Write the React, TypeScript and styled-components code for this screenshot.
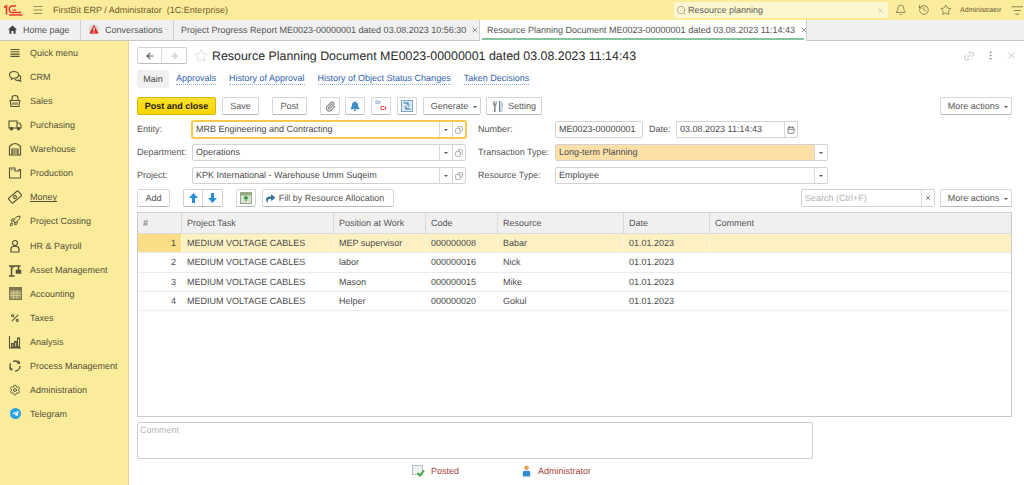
import type { ReactNode } from "react";
import styled, { createGlobalStyle } from "styled-components";
import {
  ArrowLeft,
  ArrowRight,
  Bell,
  Calendar,
  Copy,
  History,
  Link2,
  ListFilter,
  Menu,
  MoreVertical,
  Percent,
  Rocket,
  Search,
  Settings,
  Star,
  X,
  Paperclip,
} from "lucide-react";
import { FaBell, FaShare, FaTelegramPlane } from "react-icons/fa";
import { IoMdHome } from "react-icons/io";

const GlobalStyle = createGlobalStyle`
  html, body {
    margin: 0;
    padding: 0;
    background: #fff;
    font-family: "Liberation Sans", Arial, sans-serif;
    font-size: 9px;
    color: #4b4b4b;
    text-rendering: geometricPrecision;
  }
  * { box-sizing: border-box; }
`;

const Page = styled.div`
  width: 1024px;
  height: 485px;
  display: flex;
  flex-direction: column;
  overflow: hidden;
`;

const TopBar = styled.div`
  height: 20px;
  background: #fbec9c;
  display: flex;
  align-items: center;
  flex-shrink: 0;
`;

const LogoBox = styled.div`
  width: 32px;
  padding-left: 3px;
  display: flex;
  align-items: center;
`;

const AppTitle = styled.div`
  margin-left: 9px;
  color: #6e5a28;
  font-size: 9px;
  white-space: pre;
  flex: 1;
`;

const GlobalSearch = styled.div`
  width: 214px;
  height: 16px;
  background: #fdf6cf;
  border-radius: 2px;
  display: flex;
  align-items: center;
  padding: 0 4px 0 2px;
  gap: 1px;
  color: #5b5b5b;
  font-size: 9px;
  margin-right: 4px;
`;

const GlobalSearchText = styled.span`
  flex: 1;
`;

const TopIcons = styled.div`
  display: flex;
  align-items: center;
  gap: 11px;
  color: #55502f;
  width: 132px;
  padding-left: 3px;
`;

const UserName = styled.span`
  font-size: 7px;
  color: #5a5330;
  margin-left: -3px;
  margin-right: -1px;
  white-space: nowrap;
`;

const TabBar = styled.div`
  height: 21px;
  background: #f0f0f0;
  border-bottom: 1px solid #c8c8c8;
  display: flex;
  flex-shrink: 0;
`;

const Tab = styled.div<{ $width: number; $active?: boolean }>`
  width: ${(p) => p.$width}px;
  display: flex;
  align-items: center;
  gap: 5px;
  padding: 0 0 1px 7px;
  white-space: nowrap;
  color: #555;
  font-size: 9px;
  border-right: 1px solid #cfcfcf;
  position: relative;
  background: ${(p) => (p.$active ? "#fff" : "transparent")};
  height: ${(p) => (p.$active ? "21px" : "20px")};
  ${(p) =>
    p.$active &&
    `&::after {
      content: "";
      position: absolute;
      left: 2px;
      right: 2px;
      bottom: 1px;
      height: 2px;
      background: #83c3a0;
    }`}
`;

const TabClose = styled.span`
  display: inline-flex;
  color: #666;
`;

const Body = styled.div`
  flex: 1;
  display: flex;
  min-height: 0;
`;

const Sidebar = styled.div`
  width: 129px;
  background: #fbec9c;
  border-right: 1px solid #e3d688;
  flex-shrink: 0;
`;

const SideItem = styled.div<{ $underline?: boolean }>`
  height: 24.07px;
  display: flex;
  align-items: center;
  color: #54503a;
  font-size: 9px;
  text-decoration: ${(p) => (p.$underline ? "underline" : "none")};
`;

const SideIcon = styled.span`
  width: 30px;
  display: flex;
  justify-content: center;
  color: #57533a;
`;

const Tilted = styled.span`
  display: flex;
  transform: rotate(-40deg);
`;

const Mirrored = styled.span`
  display: flex;
  transform: scaleX(-1);
  color: #777;
`;

const TelegramDot = styled.span`
  width: 11px;
  height: 11px;
  background: #2aa3e6;
  border-radius: 50%;
  display: flex;
  align-items: center;
  justify-content: center;
  color: #fff;
`;

const Main = styled.div`
  flex: 1;
  padding: 6px 12px 0 8px;
  min-width: 0;
`;

const HeaderRow = styled.div`
  height: 17px;
  display: flex;
  align-items: center;
`;

const ButtonGroup = styled.div<{ $height?: number; $left?: number }>`
  display: flex;
  height: ${(p) => p.$height ?? 17}px;
  margin-left: ${(p) => p.$left ?? 0}px;
  background: #fff;
  border: 1px solid #d2d2d2;
  border-bottom-color: #bdbdbd;
  border-radius: 2px;
`;

const GroupButton = styled.div<{ $width: number; $divider?: boolean }>`
  width: ${(p) => p.$width}px;
  display: flex;
  align-items: center;
  justify-content: center;
  border-right: ${(p) => (p.$divider ? "1px solid #d8d8d8" : "none")};
`;

const FavoriteStar = styled.span`
  display: flex;
  margin-left: 7px;
  color: #c8c8c8;
`;

const Title = styled.div`
  font-size: 12.4px;
  color: #2b2b2b;
  margin-left: 4px;
  white-space: nowrap;
  flex: 1;
`;

const HeaderTools = styled.div`
  display: flex;
  align-items: center;
  gap: 10px;
  color: #a8a8a8;
  margin-right: -5px;
`;

const SectionTabs = styled.div`
  margin-top: 6px;
  height: 18px;
  display: flex;
  align-items: center;
`;

const MainTab = styled.div`
  width: 32px;
  height: 18px;
  background: #f0f0f0;
  border-radius: 2px;
  display: flex;
  align-items: center;
  justify-content: center;
  color: #4b4b4b;
  margin-right: 7px;
`;

const SectionLink = styled.span<{ $gap: number }>`
  color: #2f5fb0;
  border-bottom: 1px dotted #8fa9d8;
  margin-right: ${(p) => p.$gap}px;
  line-height: 11px;
  white-space: nowrap;
`;

const CommandBar = styled.div`
  margin-top: 9px;
  height: 18px;
  display: flex;
  align-items: stretch;
`;

const Button = styled.div<{ $width: number; $left?: number }>`
  width: ${(p) => p.$width}px;
  margin-left: ${(p) => p.$left ?? 0}px;
  display: flex;
  align-items: center;
  justify-content: center;
  gap: 4px;
  flex-shrink: 0;
  background: #fff;
  border: 1px solid #d6d6d6;
  border-bottom: 1px solid #b9b9b9;
  border-radius: 2px;
  color: #555;
  font-size: 9px;
  white-space: nowrap;
`;

const PrimaryButton = styled(Button)`
  background: linear-gradient(#fce22c, #f9d400);
  border-color: #d6b600;
  color: #1f1a00;
  font-weight: bold;
`;

const MenuButton = styled(Button)`
  gap: 5px;
  padding-left: 4px;
`;

const FillButton = styled(Button)`
  padding-right: 6px;
`;

const Caret = styled.span`
  width: 0;
  height: 0;
  border-left: 2px solid transparent;
  border-right: 2px solid transparent;
  border-top: 2px solid #555;
  margin-top: 1px;
`;

const Spacer = styled.div`
  flex: 1;
`;

const DrCr = styled.span`
  display: flex;
  flex-direction: column;
  font-size: 5px;
  line-height: 6px;
  font-weight: bold;
  color: #7a98b8;
`;

const CrText = styled.span`
  color: #d22;
  margin-left: 5px;
  font-size: 6px;
`;

const FormRow = styled.div`
  margin-top: 6px;
  height: 17px;
  display: flex;
  align-items: center;
`;

const Label = styled.div<{ $width: number }>`
  width: ${(p) => p.$width}px;
  flex-shrink: 0;
  color: #555;
  white-space: nowrap;
  padding-bottom: 1px;
`;

const Field = styled.div<{ $width: number; $focus?: boolean }>`
  width: ${(p) => p.$width}px;
  height: 17px;
  flex-shrink: 0;
  display: flex;
  align-items: stretch;
  background: #fff;
  border: 1px solid ${(p) => (p.$focus ? "#f8c94a" : "#d2d2d2")};
  border-radius: 2px;
  box-shadow: ${(p) => (p.$focus ? "0 0 0 1px #f8c94a" : "none")};
`;

const FieldValue = styled.div<{ $fill?: string }>`
  flex: 1;
  display: flex;
  align-items: center;
  padding: 0 0 1px 3px;
  color: #4b4b4b;
  white-space: nowrap;
  background: ${(p) => p.$fill ?? "transparent"};
`;

const FieldButton = styled.div`
  width: 13px;
  display: flex;
  align-items: center;
  justify-content: center;
  border-left: 1px solid #d8d8d8;
  color: #555;
`;

const FormGap = styled.div<{ $width: number }>`
  width: ${(p) => p.$width}px;
  flex-shrink: 0;
`;

const TableBar = styled.div`
  margin-top: 5px;
  height: 18px;
  display: flex;
  align-items: stretch;
`;

const SearchField = styled.div`
  width: 134px;
  margin-left: auto;
  display: flex;
  align-items: stretch;
  border: 1px solid #d2d2d2;
  border-radius: 2px;
  color: #b0b0b0;
`;

const SearchPlaceholder = styled.div`
  flex: 1;
  display: flex;
  align-items: center;
  padding-left: 3px;
`;

const Grid = styled.div`
  margin-top: 5px;
  height: 205px;
  border: 1px solid #c9c9c9;
  border-top-color: #d4d4d4;
`;

const columns = "44px 152px 92px 72px 126px 86px 1fr";

const GridHeader = styled.div`
  height: 21px;
  display: grid;
  grid-template-columns: ${columns};
  background: #f0f0f0;
  border-bottom: 1px solid #dcdcdc;
`;

const HeadCell = styled.div`
  display: flex;
  align-items: center;
  padding-left: 5px;
  border-right: 1px solid #dadada;
  color: #555;
  &:last-child {
    border-right: none;
  }
`;

const GridRow = styled.div<{ $selected?: boolean }>`
  height: 19.33px;
  display: grid;
  grid-template-columns: ${columns};
  background: ${(p) => (p.$selected ? "#fdf1c4" : "#fff")};
  border-bottom: 1px solid #ececec;
`;

const Cell = styled.div<{ $selected?: boolean }>`
  display: flex;
  align-items: center;
  padding-left: 5px;
  color: #4b4b4b;
  white-space: nowrap;
  border-right: 1px solid ${(p) => (p.$selected ? "#fff6d8" : "transparent")};
`;

const NumberCell = styled(Cell)<{ $selected?: boolean }>`
  justify-content: flex-end;
  padding: 0 5px 0 0;
  background: ${(p) => (p.$selected ? "#fbdd88" : "transparent")};
`;

const CommentBox = styled.div`
  margin-top: 5px;
  width: 676px;
  height: 37px;
  border: 1px solid #cfcfcf;
  border-radius: 2px;
  color: #b5b5b5;
  padding: 2px;
`;

const Footer = styled.div`
  margin-top: 5px;
  margin-left: 275px;
  height: 14px;
  display: flex;
  align-items: center;
  color: #a8413a;
`;

const FooterItem = styled.div<{ $width: number; $gap: number; $left?: number }>`
  width: ${(p) => p.$width}px;
  padding-left: ${(p) => p.$left ?? 0}px;
  display: flex;
  align-items: center;
  gap: ${(p) => p.$gap}px;
`;

const LogoMark = () => (
  <svg width="20" height="12" viewBox="0 0 20 12" fill="none" stroke="#e8352a">
    <path d="M1 3.5 L3.5 2 V10.5" strokeWidth="1.6" />
    <path d="M18 8.5 H9.5 A3.2 3.2 0 0 1 9.5 2 H13" strokeWidth="1.4" />
    <path d="M6 11 H19.5" strokeWidth="1.4" />
    <path d="M9.5 6 H13" strokeWidth="1.2" />
  </svg>
);

const AlertBubble = () => (
  <svg width="12" height="11" viewBox="0 0 12 11">
    <circle cx="6" cy="5.5" r="5.2" fill="#d8d8d8" />
    <path d="M6 .8 L10.6 9.6 H1.4 Z" fill="#d92a26" />
    <rect x="5.4" y="3.6" width="1.2" height="3.2" fill="#fff" />
    <rect x="5.4" y="7.4" width="1.2" height="1.2" fill="#fff" />
  </svg>
);

const SwapIcon = () => (
  <svg width="12" height="12" viewBox="0 0 12 12">
    <rect x=".5" y=".5" width="11" height="11" fill="#dcebf5" stroke="#7aa5c5" />
    <path d="M2.5 3 H7 V5.5 M9.5 9 H5 V6.5" stroke="#2f6f9f" strokeWidth="1.2" fill="none" />
    <path d="M7 7 L9.5 4.5 M3 7.5 L5 5.5" stroke="#7aa5c5" fill="none" />
  </svg>
);

const ToolsIcon = () => (
  <svg width="12" height="13" viewBox="0 0 12 13" fill="#8a8a8a">
    <path d="M1 1 V4 Q1 5.5 2 5.8 V12 H3.6 V5.8 Q4.6 5.5 4.6 4 V1 H4 V3.6 H3.2 V1 H2.4 V3.6 H1.6 V1 Z" />
    <path d="M7 1 H8.4 V12 H7 Z" fill="#5f8fae" />
    <path d="M9.6 1 Q11.5 3 11 6.5 H10.4 V12 H9.6 Z" fill="#a8a8a8" />
  </svg>
);

const TrayIcon = () => (
  <svg width="12" height="12" viewBox="0 0 12 12">
    <rect x=".5" y=".5" width="11" height="11" fill="#d8e4cf" stroke="#9aa890" />
    <rect x="1" y="1" width="10" height="2.5" fill="#8fb07c" />
    <path d="M6 9 V5 M4 6.6 L6 4.6 L8 6.6" stroke="#3e9a3e" strokeWidth="1.4" fill="none" />
  </svg>
);

const BlueArrow = ({ down }: { down?: boolean }) => (
  <svg width="9" height="10" viewBox="0 0 9 10" fill="#2a8fd8">
    <path d={down ? "M3 0 H6 V5 H9 L4.5 10 L0 5 H3 Z" : "M3 10 H6 V5 H9 L4.5 0 L0 5 H3 Z"} />
  </svg>
);

const PostedIcon = () => (
  <svg width="13" height="12" viewBox="0 0 13 12">
    <rect x=".5" y=".5" width="10" height="9" fill="#eef2f5" stroke="#b4bcc4" />
    <path d="M5.5 8 L8 10.5 L12 5.5" stroke="#3fa83f" strokeWidth="2" fill="none" />
  </svg>
);

const PersonIcon = () => (
  <svg width="9" height="12" viewBox="0 0 9 12">
    <circle cx="4.5" cy="2.8" r="2.3" fill="#e2a45f" />
    <path d="M.8 11.5 V7.5 Q.8 5.8 2.6 5.8 H6.4 Q8.2 5.8 8.2 7.5 V11.5 Z" fill="#2f8ecb" />
  </svg>
);

const SideSvg = ({ children, width = 1.1 }: { children: ReactNode; width?: number }) => (
  <svg width="14" height="14" viewBox="0 0 14 14" fill="none" stroke="currentColor" strokeWidth={width}>
    {children}
  </svg>
);

const sideItems: { name: string; icon: ReactNode; underline?: boolean }[] = [
  {
    name: "Quick menu",
    icon: (
      <SideSvg>
        <path d="M2.5 3.5 H11.5 M2.5 5.8 H11.5 M2.5 8.1 H11.5 M2.5 10.4 H11.5" />
      </SideSvg>
    ),
  },
  {
    name: "CRM",
    icon: (
      <SideSvg>
        <path d="M1.5 5 C1.5 2.8 3.6 1.5 6 1.5 C8.5 1.5 10.5 3 10.5 5 C10.5 7 8.5 8.3 6 8.3 L5 8.3 L3.4 9.4 L3.4 7.8 C2.2 7.2 1.5 6.2 1.5 5Z" />
        <path d="M11 5 C12.6 6 13 7.6 12.2 9 L12.6 11.2 L10.5 10.2 C9 10.6 7.5 10.2 6.6 9" />
      </SideSvg>
    ),
  },
  {
    name: "Sales",
    icon: (
      <SideSvg>
        <path d="M1.5 6.5 H12.5 M2.3 6.5 L3 12.5 H11 L11.7 6.5" />
        <path d="M4 6.5 V4 Q4 1.5 7 1.5 Q10 1.5 10 4 V6.5" />
        <path d="M5 8.3 V11 M7 8.3 V11 M9 8.3 V11" />
      </SideSvg>
    ),
  },
  {
    name: "Purchasing",
    icon: (
      <SideSvg>
        <rect x="1" y="3" width="8" height="7" />
        <path d="M9 5 H11.8 L13 7 V10 H9" />
        <circle cx="3.5" cy="10.8" r="1.2" fill="currentColor" />
        <circle cx="10.5" cy="10.8" r="1.2" fill="currentColor" />
      </SideSvg>
    ),
  },
  {
    name: "Warehouse",
    icon: (
      <SideSvg width={1.2}>
        <path d="M1.5 13 V4.5 Q4 1.5 7 1.5 Q10 1.5 12.5 4.5 V13 Z" />
        <path d="M4 13 V7 H10 V13 M4 9 H10 M4 11 H10" />
      </SideSvg>
    ),
  },
  {
    name: "Production",
    icon: (
      <SideSvg>
        <path d="M1.5 12 V2 H7 V5 H11 V3.5 H12.5 V12 Z" />
        <path d="M3 3.7 H5.5" strokeDasharray="1 .6" />
      </SideSvg>
    ),
  },
  {
    name: "Money",
    icon: (
      <SideSvg>
        <g transform="rotate(-40 7 7)">
          <rect x=".8" y="3.8" width="12.4" height="6.4" rx="1" />
          <circle cx="7" cy="7" r="1.5" />
        </g>
      </SideSvg>
    ),
    underline: true,
  },
  { name: "Project Costing", icon: <Rocket size={12} strokeWidth={2} /> },
  {
    name: "HR & Payroll",
    icon: (
      <SideSvg width={1.2}>
        <circle cx="7" cy="4" r="2.5" />
        <path d="M3 13 V10 Q3 7.5 5.5 7.5 H8.5 Q11 7.5 11 10 V13 Z" />
      </SideSvg>
    ),
  },
  {
    name: "Asset Management",
    icon: (
      <SideSvg width={1.5}>
        <path d="M3.5 13 V2.5 M1 13 H6.5 M1 3 H12.5 M10.5 3 V7" />
        <rect x="8.5" y="7.5" width="4" height="2.5" fill="currentColor" />
        <path d="M3.5 6 L7 3" strokeWidth="1" />
      </SideSvg>
    ),
  },
  {
    name: "Accounting",
    icon: (
      <svg width="13" height="13" viewBox="0 0 13 13">
        <rect x=".5" y=".5" width="12" height="12" fill="#a39c6c" stroke="#7d7850" />
        <rect x="1" y="1" width="11" height="2.4" fill="#7d7850" />
        <path d="M1 6 H12 M1 8.5 H12 M4.5 3.4 V12 M8 3.4 V12" stroke="#e8dc94" strokeWidth=".7" />
      </svg>
    ),
  },
  { name: "Taxes", icon: <Percent size={10} strokeWidth={2.6} /> },
  {
    name: "Analysis",
    icon: (
      <SideSvg>
        <path d="M1.5 1 V13 H13" />
        <rect x="3.5" y="8.5" width="1.8" height="4" />
        <rect x="6.5" y="6.5" width="1.8" height="6" />
        <rect x="9.5" y="3" width="2" height="9.5" />
      </SideSvg>
    ),
  },
  {
    name: "Process Management",
    icon: (
      <SideSvg width={1.3}>
        <circle cx="7" cy="7" r="5" strokeDasharray="7.5 2.97" />
        <path d="M10.5 1.5 L11.8 4 L9 4.2 M1.5 8.5 L2.5 11 L4.5 9.5" strokeWidth=".9" />
      </SideSvg>
    ),
  },
  { name: "Administration", icon: <Settings size={12} strokeWidth={1.8} /> },
];

const rows = [
  { n: 1, position: "MEP supervisor", code: "000000008", resource: "Babar" },
  { n: 2, position: "labor", code: "000000016", resource: "Nick" },
  { n: 3, position: "Mason", code: "000000015", resource: "Mike" },
  { n: 4, position: "Helper", code: "000000020", resource: "Gokul" },
];

const Dropdown = () => (
  <FieldButton>
    <Caret />
  </FieldButton>
);

const OpenButton = () => (
  <FieldButton>
    <Mirrored>
      <Copy size={8} strokeWidth={1.8} />
    </Mirrored>
  </FieldButton>
);

export default function App() {
  return (
    <Page>
      <GlobalStyle />
      <TopBar>
        <LogoBox>
          <LogoMark />
        </LogoBox>
        <Menu size={12} color="#6b6546" strokeWidth={1.4} />
        <AppTitle>FirstBit ERP / Administrator  (1C:Enterprise)</AppTitle>
        <GlobalSearch>
          <Search size={11} strokeWidth={1.2} color="#777" />
          <GlobalSearchText>Resource planning</GlobalSearchText>
          <X size={7} color="#aaa" />
        </GlobalSearch>
        <TopIcons>
          <Bell size={12} strokeWidth={1.3} />
          <History size={12} strokeWidth={1.3} />
          <Star size={12} strokeWidth={1.3} />
          <UserName>Administrator</UserName>
          <ListFilter size={13} strokeWidth={1.3} />
        </TopIcons>
      </TopBar>
      <TabBar>
        <Tab $width={81}>
          <IoMdHome size={11} color="#444" />
          Home page
        </Tab>
        <Tab $width={93}>
          <AlertBubble />
          Conversations
        </Tab>
        <Tab $width={306}>
          Project Progress Report ME0023-00000001 dated 03.08.2023 10:56:30
          <TabClose>
            <X size={8} />
          </TabClose>
        </Tab>
        <Tab $width={327} $active>
          Resource Planning Document ME0023-00000001 dated 03.08.2023 11:14:43
          <TabClose>
            <X size={8} />
          </TabClose>
        </Tab>
      </TabBar>
      <Body>
        <Sidebar>
          {sideItems.map((item) => (
            <SideItem key={item.name} $underline={item.underline}>
              <SideIcon>{item.icon}</SideIcon>
              {item.name}
            </SideItem>
          ))}
          <SideItem>
            <SideIcon>
              <TelegramDot>
                <FaTelegramPlane size={7} />
              </TelegramDot>
            </SideIcon>
            Telegram
          </SideItem>
        </Sidebar>
        <Main>
          <HeaderRow>
            <ButtonGroup>
              <GroupButton $width={24} $divider>
                <ArrowLeft size={10} strokeWidth={2.6} color="#555" />
              </GroupButton>
              <GroupButton $width={24}>
                <ArrowRight size={10} strokeWidth={2.6} color="#c4c4c4" />
              </GroupButton>
            </ButtonGroup>
            <FavoriteStar>
              <Star size={14} strokeWidth={1} />
            </FavoriteStar>
            <Title>Resource Planning Document ME0023-00000001 dated 03.08.2023 11:14:43</Title>
            <HeaderTools>
              <Tilted>
                <Link2 size={12} strokeWidth={1.4} />
              </Tilted>
              <MoreVertical size={11} strokeWidth={2} color="#888" />
              <X size={11} strokeWidth={1.4} />
            </HeaderTools>
          </HeaderRow>
          <SectionTabs>
            <MainTab>Main</MainTab>
            <SectionLink $gap={13}>Approvals</SectionLink>
            <SectionLink $gap={13}>History of Approval</SectionLink>
            <SectionLink $gap={13}>History of Object Status Changes</SectionLink>
            <SectionLink $gap={0}>Taken Decisions</SectionLink>
          </SectionTabs>
          <CommandBar>
            <PrimaryButton $width={79}>Post and close</PrimaryButton>
            <Button $width={37} $left={6}>
              Save
            </Button>
            <Button $width={35} $left={13}>
              Post
            </Button>
            <Button $width={20} $left={13}>
              <Paperclip size={11} color="#888" strokeWidth={2.4} />
            </Button>
            <Button $width={20} $left={5}>
              <FaBell size={10} color="#3f8fc4" />
            </Button>
            <Button $width={20} $left={6}>
              <DrCr>
                Dr
                <CrText>Cr</CrText>
              </DrCr>
            </Button>
            <Button $width={20} $left={6}>
              <SwapIcon />
            </Button>
            <MenuButton $width={58} $left={6}>
              Generate
              <Caret />
            </MenuButton>
            <Button $width={56} $left={5}>
              <ToolsIcon />
              Setting
            </Button>
            <Spacer />
            <MenuButton $width={72}>
              More actions
              <Caret />
            </MenuButton>
          </CommandBar>
          <FormRow>
            <Label $width={55}>Entity:</Label>
            <Field $width={274} $focus>
              <FieldValue>MRB Engineering and Contracting</FieldValue>
              <Dropdown />
              <OpenButton />
            </Field>
            <FormGap $width={12} />
            <Label $width={77}>Number:</Label>
            <Field $width={88}>
              <FieldValue>ME0023-00000001</FieldValue>
            </Field>
            <FormGap $width={6} />
            <Label $width={27}>Date:</Label>
            <Field $width={122}>
              <FieldValue>03.08.2023 11:14:43</FieldValue>
              <FieldButton>
                <Calendar size={8} strokeWidth={2} />
              </FieldButton>
            </Field>
          </FormRow>
          <FormRow>
            <Label $width={55}>Department:</Label>
            <Field $width={274}>
              <FieldValue>Operations</FieldValue>
              <Dropdown />
              <OpenButton />
            </Field>
            <FormGap $width={12} />
            <Label $width={77}>Transaction Type:</Label>
            <Field $width={273}>
              <FieldValue $fill="#fde0a8">Long-term Planning</FieldValue>
              <Dropdown />
            </Field>
          </FormRow>
          <FormRow>
            <Label $width={55}>Project:</Label>
            <Field $width={274}>
              <FieldValue>KPK International - Warehouse Umm Suqeim</FieldValue>
              <Dropdown />
              <OpenButton />
            </Field>
            <FormGap $width={12} />
            <Label $width={77}>Resource Type:</Label>
            <Field $width={273}>
              <FieldValue>Employee</FieldValue>
              <Dropdown />
            </Field>
          </FormRow>
          <TableBar>
            <Button $width={33}>Add</Button>
            <ButtonGroup $height={18} $left={13}>
              <GroupButton $width={19} $divider>
                <BlueArrow />
              </GroupButton>
              <GroupButton $width={19}>
                <BlueArrow down />
              </GroupButton>
            </ButtonGroup>
            <Button $width={20} $left={13}>
              <TrayIcon />
            </Button>
            <FillButton $width={132} $left={6}>
              <FaShare size={9} color="#2c6f9c" />
              Fill by Resource Allocation
            </FillButton>
            <SearchField>
              <SearchPlaceholder>Search (Ctrl+F)</SearchPlaceholder>
              <FieldButton>
                <X size={6} strokeWidth={3} />
              </FieldButton>
            </SearchField>
            <MenuButton $width={72} $left={5}>
              More actions
              <Caret />
            </MenuButton>
          </TableBar>
          <Grid>
            <GridHeader>
              <HeadCell>#</HeadCell>
              <HeadCell>Project Task</HeadCell>
              <HeadCell>Position at Work</HeadCell>
              <HeadCell>Code</HeadCell>
              <HeadCell>Resource</HeadCell>
              <HeadCell>Date</HeadCell>
              <HeadCell>Comment</HeadCell>
            </GridHeader>
            {rows.map((row) => {
              const selected = row.n === 1;
              return (
                <GridRow key={row.n} $selected={selected}>
                  <NumberCell $selected={selected}>{row.n}</NumberCell>
                  <Cell $selected={selected}>MEDIUM VOLTAGE CABLES</Cell>
                  <Cell $selected={selected}>{row.position}</Cell>
                  <Cell $selected={selected}>{row.code}</Cell>
                  <Cell $selected={selected}>{row.resource}</Cell>
                  <Cell $selected={selected}>01.01.2023</Cell>
                  <Cell />
                </GridRow>
              );
            })}
          </Grid>
          <CommentBox>Comment</CommentBox>
          <Footer>
            <FooterItem $width={107} $gap={6}>
              <PostedIcon />
              Posted
            </FooterItem>
            <FooterItem $width={90} $gap={7} $left={3}>
              <PersonIcon />
              Administrator
            </FooterItem>
          </Footer>
        </Main>
      </Body>
    </Page>
  );
}
